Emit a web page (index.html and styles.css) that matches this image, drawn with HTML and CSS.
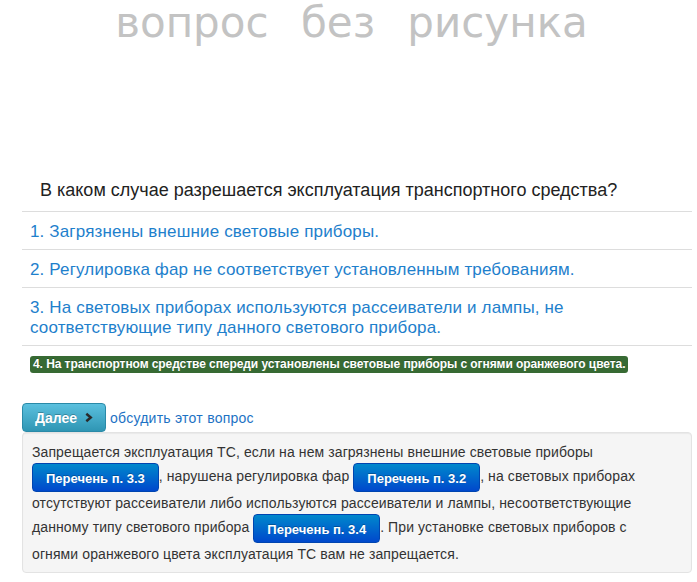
FILE: index.html
```html
<!DOCTYPE html>
<html lang="ru">
<head>
<meta charset="utf-8">
<title>Вопрос</title>
<link rel="stylesheet" href="styles.css">
</head>
<body>
<div class="picture">
  <p class="picture-title">вопрос без рисунка</p>
</div>
<div class="main">
  <div class="question">В каком случае разрешается эксплуатация транспортного средства?</div>
  <ul class="answers">
    <li class="answer"><a href="#">1. Загрязнены внешние световые приборы.</a></li>
    <li class="answer"><a href="#">2. Регулировка фар не соответствует установленным требованиям.</a></li>
    <li class="answer"><a href="#">3. На световых приборах используются рассеиватели и лампы, не соответствующие типу данного светового прибора.</a></li>
    <li class="answer answer-correct"><span class="label-success">4. На транспортном средстве спереди установлены световые приборы с огнями оранжевого цвета.</span></li>
  </ul>
  <div class="actions">
    <a class="btn-next" href="#">Далее <svg class="chevron" width="9" height="11" viewBox="0 0 9 11"><path d="M1.5 1.2 L6.5 5.5 L1.5 9.8" fill="none" stroke="#2a2a2a" stroke-width="2.8" stroke-linejoin="miter"/></svg></a>
    <a class="discuss" href="#">обсудить этот вопрос</a>
  </div>
  <div class="well">Запрещается эксплуатация ТС, если на нем загрязнены внешние световые приборы <a class="btn-ref" href="#">Перечень п. 3.3</a>, нарушена регулировка фар <a class="btn-ref" href="#">Перечень п. 3.2</a>, на световых приборах отсутствуют рассеиватели либо используются рассеиватели и лампы, несоответствующие данному типу светового прибора <a class="btn-ref" href="#">Перечень п. 3.4</a>. При установке световых приборов с огнями оранжевого цвета эксплуатация ТС вам не запрещается.</div>
</div>
</body>
</html>
```
FILE: styles.css
```css
html, body {
  margin: 0;
  padding: 0;
  background: #fff;
}
body {
  font-family: "Liberation Sans", Arial, sans-serif;
  color: #333;
}
.picture {
  height: 180px;
}
.picture-title {
  margin: 0;
  text-align: center;
  font-family: "DejaVu Sans", sans-serif;
  font-size: 42px;
  line-height: 46px;
  color: #c3c3c3;
  word-spacing: 19px;
  padding-left: 6px;
}
.main {
  padding: 0 5px 0 22px;
}
.question {
  font-size: 18px;
  line-height: 20px;
  padding-left: 18px;
  color: #222;
  margin-bottom: 11px;
}
.answers {
  list-style: none;
  margin: 0;
  padding: 0;
}
.answer {
  border-top: 1px solid #dddddd;
  padding: 10px 8px 7px;
  font-size: 17px;
  letter-spacing: 0.15px;
  line-height: 20px;
}
.answer a {
  color: #1e80cc;
  text-decoration: none;
}
.answer-correct {
  padding: 10px 8px 0;
  line-height: 17px;
  letter-spacing: 0;
}
.label-success {
  display: inline-block;
  background: #376a33;
  color: #fff;
  font-size: 12px;
  font-weight: bold;
  letter-spacing: -0.07px;
  line-height: 13px;
  padding: 2px 3px;
  border-radius: 3px;
  text-shadow: 0 -1px 0 rgba(0,0,0,0.25);
  vertical-align: top;
}
.actions {
  display: flex;
  align-items: center;
  gap: 4px;
  margin-top: 30px;
}
.btn-next {
  display: inline-flex;
  align-items: center;
  gap: 8px;
  height: 29px;
  box-sizing: border-box;
  padding: 0 12px;
  font-size: 14px;
  font-weight: bold;
  color: #fff;
  text-decoration: none;
  text-shadow: 0 -1px 0 rgba(0,0,0,0.25);
  background: linear-gradient(#5bc0de, #2f96b4);
  border: 1px solid #2a8aa8;
  border-radius: 4px;
  width: 84px;
}
.chevron {
  display: block;
}
.discuss {
  font-size: 14px;
  letter-spacing: 0.25px;
  color: #1d72c4;
  text-decoration: none;
}
.well {
  background: #f5f5f5;
  border: 1px solid #e3e3e3;
  border-radius: 4px;
  box-shadow: inset 0 1px 1px rgba(0,0,0,0.05);
  padding: 8px 15px 7px 9px;
  font-size: 14px;
  letter-spacing: 0.1px;
  line-height: 22px;
  color: #333;
}
.btn-ref {
  display: inline-block;
  height: 29px;
  line-height: 29px;
  box-sizing: border-box;
  padding: 0 13px;
  font-size: 13px;
  font-weight: bold;
  letter-spacing: 0;
  color: #fff;
  text-decoration: none;
  text-shadow: 0 -1px 0 rgba(0,0,0,0.25);
  background: linear-gradient(#0088cc, #0048cc);
  border: 1px solid #0045b0;
  border-radius: 4px;
  vertical-align: middle;
}
```
